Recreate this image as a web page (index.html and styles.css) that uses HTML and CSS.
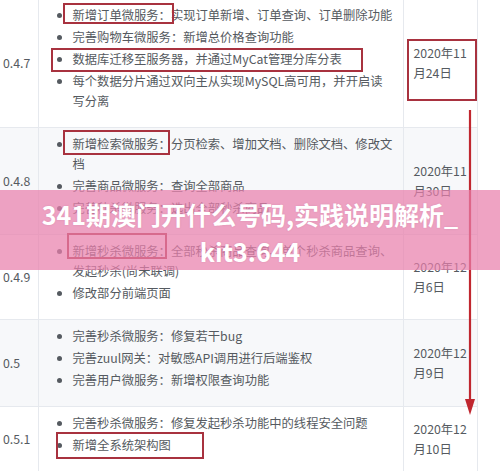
FILE: index.html
```html
<!DOCTYPE html>
<html lang="zh-CN">
<head>
<meta charset="utf-8">
<title>更新日志</title>
<link rel="stylesheet" href="styles.css">
</head>
<body>
<div class="page">
  <table class="log">
    <colgroup>
      <col class="c-ver">
      <col class="c-desc">
      <col class="c-date">
    </colgroup>
    <tr>
      <td class="ver">0.4.7</td>
      <td class="desc">
        <ul>
          <li>新增订单微服务：实现订单新增、订单查询、订单删除功能</li>
          <li>完善购物车微服务：新增总价格查询功能</li>
          <li>数据库迁移至服务器，并通过MyCat管理分库分表</li>
          <li>每个数据分片通过双向主从实现MySQL高可用，并开启读写分离</li>
        </ul>
      </td>
      <td class="date">2020年11月24日</td>
    </tr>
    <tr class="alt">
      <td class="ver">0.4.8</td>
      <td class="desc">
        <ul>
          <li>新增检索微服务：分页检索、增加文档、删除文档、修改文档</li>
          <li>完善商品微服务：查询全部商品</li>
          <li>完善秒杀微服务：选出全部秒杀商品</li>
        </ul>
      </td>
      <td class="date">2020年11月30日</td>
    </tr>
    <tr>
      <td class="ver">0.4.9</td>
      <td class="desc">
        <ul>
          <li>新增秒杀微服务：全部秒杀商品查询、单个秒杀商品查询、发起秒杀(尚未联调)</li>
          <li>修改部分前端页面</li>
        </ul>
      </td>
      <td class="date">2020年12月6日</td>
    </tr>
    <tr class="alt">
      <td class="ver">0.5</td>
      <td class="desc">
        <ul>
          <li>完善秒杀微服务：修复若干bug</li>
          <li>完善zuul网关：对敏感API调用进行后端鉴权</li>
          <li>完善用户微服务：新增权限查询功能</li>
        </ul>
      </td>
      <td class="date">2020年12月9日</td>
    </tr>
    <tr>
      <td class="ver">0.5.1</td>
      <td class="desc">
        <ul>
          <li>完善秒杀微服务：修复发起秒杀功能中的线程安全问题</li>
          <li>新增全系统架构图</li>
        </ul>
      </td>
      <td class="date">2020年12月10日</td>
    </tr>
  </table>

  <div class="mark m1"></div>
  <div class="mark m2"></div>
  <div class="mark m3"></div>
  <div class="mark m4"></div>
  <div class="mark m5"></div>
  <div class="mark m6"></div>

  <svg class="arrow" width="14" height="310" viewBox="0 0 14 310">
    <line x1="7" y1="0" x2="7" y2="292" stroke="#c0272f" stroke-width="2.2"/>
    <polygon points="2,289 12,289 7,305" fill="#c0272f"/>
  </svg>

  <div class="banner">
    <span class="bl">341期澳门开什么号码,实践说明解析_</span>
    <span class="bl">kit3.644</span>
  </div>
</div>
</body>
</html>
```

FILE: styles.css
```css
html, body {
  margin: 0;
  padding: 0;
  background: #ffffff;
}

.page {
  position: relative;
  width: 500px;
  height: 471px;
  overflow: hidden;
  font-family: "Noto Sans CJK SC", "Noto Sans", sans-serif;
  font-size: 12.3px;
  color: #555a60;
}

.log {
  border-collapse: collapse;
  table-layout: fixed;
  width: 477px;
  margin-top: -2px;
}

.c-ver { width: 38px; }
.c-desc { width: 365px; }
.c-date { width: 74px; }

.log td {
  border: 1px solid #e6e9ee;
  vertical-align: middle;
}

.log tr.alt td {
  background: #f7f8fa;
}

.log td.ver {
  border-left: none;
  padding: 0 0 0 3px;
  line-height: 20px;
}

.log td.desc {
  vertical-align: top;
  padding: 6px 9px 16px 12px;
}

.log td.date {
  padding: 0 9px 0 10px;
  line-height: 20px;
}

.desc ul {
  margin: 0;
  padding-left: 22px;
  list-style: disc;
}

.desc li {
  line-height: 20px;
}

.desc li + li {
  margin-top: 2px;
}

.mark {
  position: absolute;
  box-sizing: border-box;
  border: 2px solid #a8323f;
}

.m1 { left: 63px; top: 3px; width: 111px; height: 21px; }
.m2 { left: 51px; top: 48px; width: 312px; height: 24px; }
.m3 { left: 407px; top: 39px; width: 70px; height: 62px; }
.m4 { left: 63px; top: 130px; width: 107px; height: 25px; }
.m5 { left: 67px; top: 233px; width: 100px; height: 26px; }
.m6 { left: 56px; top: 432px; width: 148px; height: 27px; }

.arrow {
  position: absolute;
  left: 463px;
  top: 110px;
}

.banner {
  position: absolute;
  left: 0;
  top: 190px;
  width: 500px;
  height: 80px;
  box-sizing: border-box;
  padding-top: 6px;
  background: rgba(233, 128, 172, 0.72);
  color: #ffffff;
  text-align: center;
  font-family: "Noto Sans CJK SC", "Noto Sans", sans-serif;
  font-weight: 700;
  font-size: 25px;
  line-height: 37px;
  text-shadow: 0 0 2px rgba(120, 40, 80, 0.15);
}

.banner .bl {
  display: block;
}
```
